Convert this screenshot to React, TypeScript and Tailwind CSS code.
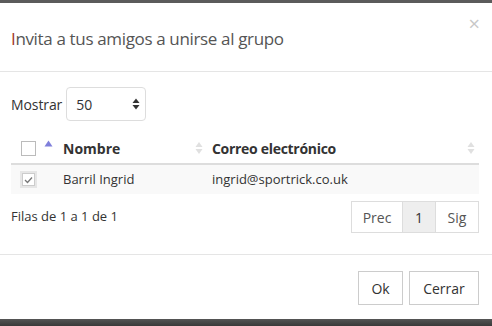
import React from "react";

const SortBoth = () => (
  <svg width="8" height="14" viewBox="0 0 8 14">
    <path d="M4 1 L7.5 6 L0.5 6 Z" fill="#e0e0e0" />
    <path d="M4 13 L7.5 8 L0.5 8 Z" fill="#e0e0e0" />
  </svg>
);

const SortAsc = () => (
  <svg width="9" height="14" viewBox="0 0 9 14">
    <path d="M4.5 0.5 L8.5 6.5 L0.5 6.5 Z" fill="#7f7fdb" />
  </svg>
);

export default function App() {
  return (
    <div
      className="w-[492px] h-[326px] bg-[#5b5b5b] pt-[3px] overflow-hidden"
      style={{ fontFamily: '"Open Sans", "Liberation Sans", sans-serif' }}
    >
      <div className="bg-white w-[492px] h-[316px] flex flex-col text-[#333]">
        {/* Header */}
        <div className="h-[69px] border-b border-[#e5e5e5] relative flex items-center px-[11px]">
          <h4 className="text-[17px] tracking-[-0.35px] text-[#555] leading-none pt-[3px]">
            <span className="text-[#a0352c]">I</span>nvita a tus amigos a unirse al grupo
          </h4>
          <span className="absolute right-[12px] top-[11px] text-[20px] leading-none text-[#c8c8c8]">
            ×
          </span>
        </div>
        {/* Body */}
        <div className="h-[183px] border-b border-[#e5e5e5] px-[11px] pt-[15px]">
          <div className="flex items-center gap-[4px] h-[34px] text-[14px]">
            <span className="tracking-[-0.1px]">Mostrar</span>
            <div className="w-[80px] h-[34px] border border-[#ddd] rounded-[4px] flex items-center justify-between pl-[9px] pr-[5px]">
              <span>50</span>
              <svg width="8" height="14" viewBox="0 0 8 14">
                <path d="M4 1.5 L7.5 6 L0.5 6 Z" fill="#333" />
                <path d="M4 12.5 L7.5 8 L0.5 8 Z" fill="#333" />
              </svg>
            </div>
          </div>
          {/* Table */}
          <div className="mt-[16px] w-[468px]">
            <div className="flex items-center h-[28px] pb-[4px] border-b-2 border-[#ddd] font-bold text-[14px]">
              <div className="w-[52px] flex items-center pl-[10px] gap-[8px]">
                <span className="w-[15px] h-[15px] border border-[#bbb] bg-white block" />
                <span className="-mt-[3px]">
                  <SortAsc />
                </span>
              </div>
              <div className="w-[146px] flex items-center justify-between pr-[6px]">
                <span>Nombre</span>
                <SortBoth />
              </div>
              <div className="flex-1 flex items-center justify-between pl-[3px] pr-[4px]">
                <span className="tracking-[-0.3px]">Correo electrónico</span>
                <SortBoth />
              </div>
            </div>
            <div className="flex items-center h-[29px] bg-[#f9f9f9] text-[13px]">
              <div className="w-[52px] pl-[9px]">
                <span className="w-[17px] h-[17px] bg-[#e6e6e6] flex items-center justify-center">
                  <span className="w-[13px] h-[13px] bg-white border border-[#ccc] flex items-center justify-center">
                    <svg width="9" height="8" viewBox="0 0 9 8">
                      <path d="M1 4 L3.5 6.5 L8 1.5" stroke="#777" strokeWidth="1.3" fill="none" />
                    </svg>
                  </span>
                </span>
              </div>
              <div className="w-[146px]">Barril Ingrid</div>
              <div className="flex-1 pl-[3px]">ingrid@sportrick.co.uk</div>
            </div>
          </div>
          <div className="mt-[7px] flex items-center justify-between w-[468px]">
            <span className="text-[13px]">Filas de 1 a 1 de 1</span>
            <div className="flex h-[32px] text-[14px] text-[#555]">
              <span className="w-[52px] border border-[#ddd] flex items-center justify-center">Prec</span>
              <span className="w-[32px] border-y border-[#ddd] bg-[#eee] text-[#333] flex items-center justify-center">1</span>
              <span className="w-[44px] border border-[#ddd] flex items-center justify-center">Sig</span>
            </div>
          </div>
        </div>
        {/* Footer */}
        <div className="flex-1 flex justify-end items-start gap-[6px] pr-[13px] pt-[16px] text-[14px]">
          <button className="h-[34px] w-[45px] border border-[#ccc] bg-white text-[#333]">Ok</button>
          <button className="h-[34px] w-[70px] border border-[#ccc] bg-white text-[#333]">Cerrar</button>
        </div>
      </div>
      <div className="h-[7px] bg-gradient-to-b from-[#555] to-[#3a3a3a]" />
    </div>
  );
}
